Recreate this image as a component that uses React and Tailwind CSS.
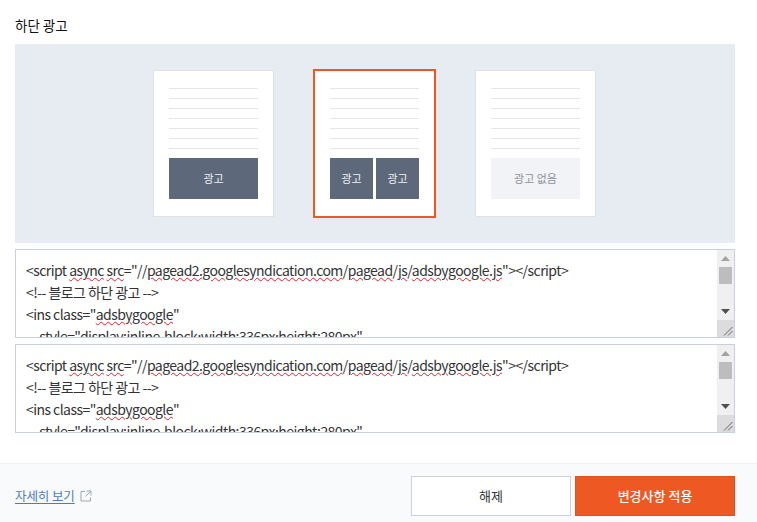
function W({ children }) {
  return <span className="underline decoration-wavy decoration-[#e0202c] decoration-1 underline-offset-[1px]">{children}</span>;
}
function Lines() {
  return (
    <div className="flex flex-col gap-[9px]">
      {[0, 1, 2, 3, 4, 5, 6].map((i) => (
        <div key={i} className="h-px bg-[#e4e6e8]" />
      ))}
    </div>
  );
}
function Ad({ children, muted }) {
  return (
    <div className={`flex-1 h-[41px] flex items-center justify-center text-[11px] ${muted ? "bg-[#f1f3f6] text-[#8d9096]" : "bg-[#5d687b] text-[#f0f1f3]"}`}>
      {children}
    </div>
  );
}
function Card({ selected, children }) {
  return (
    <div className={selected
      ? "w-[123px] h-[149px] bg-white border-2 border-[#ee5823] px-[15px] pt-[17px]"
      : "w-[121px] h-[147px] bg-white border border-[#dde2e8] px-[15px] pt-[17px]"}>
      <Lines />
      <div className="flex gap-[3px] mt-[9px]">{children}</div>
    </div>
  );
}
function Arrow({ up, color }) {
  return (
    <svg width="9" height="5" viewBox="0 0 9 5" className="block">
      <path d={up ? "M4.5 0 L9 5 L0 5 Z" : "M0 0 L9 0 L4.5 5 Z"} fill={color} />
    </svg>
  );
}
function Code() {
  return (
    <div className="h-[89px] border border-[#c8d0dc] bg-white flex overflow-hidden">
      <div className="flex-1 min-w-0 overflow-hidden pl-[10px] pt-[9px] text-[14px] leading-[22px] tracking-[-0.55px] text-[#333] whitespace-pre">
        <div>{"<script "}<W>async</W>{" "}<W>src</W>{'="//'}<W>pagead2.googlesyndication.com</W>{"/"}<W>pagead</W>{"/"}<W>js</W>{"/"}<W>adsbygoogle.js</W>{'"></script>'}</div>
        <div>{"<!-- 블로그 하단 광고 -->"}</div>
        <div>{'<ins class="'}<W>adsbygoogle</W>{'"'}</div>
        <div className="pl-[3px]">{'    style="display:inline-block;width:336px;height:280px"'}</div>
      </div>
      <div className="w-[17px] shrink-0 flex flex-col bg-[#f0f0f0]">
        <div className="h-[17px] flex items-center justify-center"><Arrow up color="#a3a3a3" /></div>
        <div className="h-[17px] mx-[2px] bg-[#bdbdbd]" />
        <div className="flex-1" />
        <div className="h-[17px] flex items-center justify-center"><Arrow color="#505050" /></div>
        <div className="h-[17px] bg-[#dcdcdc] flex items-end justify-end">
          <svg width="10" height="10" viewBox="0 0 10 10" className="block mb-[1px] mr-[1px]">
            <path d="M1 9.5 L9.5 1 M5 9.5 L9.5 5" stroke="#666" strokeWidth="1" fill="none" />
          </svg>
        </div>
      </div>
    </div>
  );
}
export default function App() {
  return (
    <div className="w-[757px] h-[522px] bg-white flex flex-col overflow-hidden" style={{ fontFamily: '"Noto Sans CJK KR", "Noto Sans", sans-serif' }}>
      <div className="flex-1 pl-[15px] pr-[22px] pt-[15px] flex flex-col">
        <div className="h-[22px] text-[13.5px] leading-[20px] text-[#111] mb-[7px]">하단 광고</div>
        <div className="h-[199px] bg-[#e7ecf3] flex justify-center items-center gap-[39px] pr-[1px] mb-[6px]">
          <Card><Ad>광고</Ad></Card>
          <Card selected><Ad>광고</Ad><Ad>광고</Ad></Card>
          <Card><Ad muted>광고 없음</Ad></Card>
        </div>
        <div className="flex flex-col gap-[6px]">
          <Code />
          <Code />
        </div>
      </div>
      <div className="h-[59px] bg-[#f9fafc] border-t border-[#f0f1f4] pr-[22px] pl-[15px] pt-[6px] flex items-center justify-between">
        <div className="flex items-center gap-[5px]">
          <span className="text-[12.5px] tracking-[-0.1px] text-[#4c7db5] underline underline-offset-2">자세히 보기</span>
          <svg width="12" height="12" viewBox="0 0 12 12" fill="none" stroke="#a0a6b0" strokeWidth="1">
            <path d="M5 1.5 H1 V11 H10.5 V7.5 M6.5 1 H11 V5.5 M11 1 L5.5 6.5" />
          </svg>
        </div>
        <div className="flex gap-[4px]">
          <button className="w-[160px] h-[40px] bg-white border border-[#c8d2de] text-[13px] text-[#333]">해제</button>
          <button className="w-[160px] h-[40px] bg-[#ee5823] border border-[#e0501f] text-[13px] font-medium text-white">변경사항 적용</button>
        </div>
      </div>
    </div>
  );
}
